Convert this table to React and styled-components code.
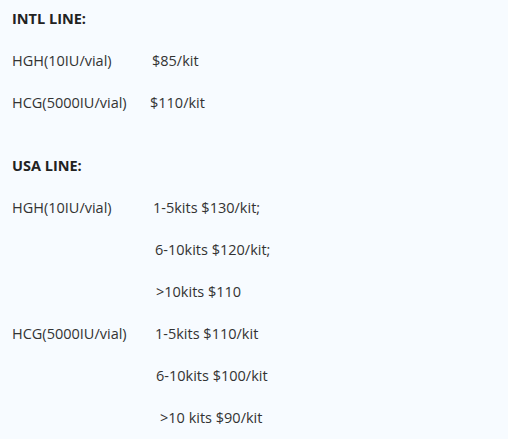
import React from "react";
import styled, { createGlobalStyle } from "styled-components";

const Global = createGlobalStyle`
  html, body { margin: 0; padding: 0; background: #f7fbff; }
  body { font-family: "Open Sans", "Noto Sans", sans-serif; }
`;

const Page = styled.div`
  padding: 8px 12px 0;
  color: #333;
  font-size: 14.5px;
`;

const Heading = styled.p`
  margin: 0 0 21px;
  line-height: 21px;
  font-weight: 700;
  color: #222;
`;

const Row = styled.div`
  display: grid;
  grid-template-columns: 138px auto;
  margin: 0 0 21px;
  line-height: 21px;
  white-space: nowrap;
`;

const Label = styled.span``;

const Value = styled.span`
  padding-left: ${(p) => p.$indent || 0}px;
`;

const Spacer = styled.div`
  height: 21px;
`;

const intl = [
  { label: "HGH(10IU/vial)", value: "$85/kit", indent: 2 },
  { label: "HCG(5000IU/vial)", value: "$110/kit", indent: 0 },
];

const usa = [
  { label: "HGH(10IU/vial)", value: "1-5kits $130/kit;", indent: 3 },
  { label: "", value: "6-10kits $120/kit;", indent: 5 },
  { label: "", value: ">10kits $110", indent: 6 },
  { label: "HCG(5000IU/vial)", value: "1-5kits $110/kit", indent: 5 },
  { label: "", value: "6-10kits $100/kit", indent: 6 },
  { label: "", value: ">10 kits $90/kit", indent: 10 },
];

export default function App() {
  return (
    <Page>
      <Global />
      <Heading>INTL LINE:</Heading>
      {intl.map((r, i) => (
        <Row key={"i" + i}>
          <Label>{r.label}</Label>
          <Value $indent={r.indent}>{r.value}</Value>
        </Row>
      ))}
      <Spacer />
      <Heading>USA LINE:</Heading>
      {usa.map((r, i) => (
        <Row key={"u" + i}>
          <Label>{r.label}</Label>
          <Value $indent={r.indent}>{r.value}</Value>
        </Row>
      ))}
    </Page>
  );
}
